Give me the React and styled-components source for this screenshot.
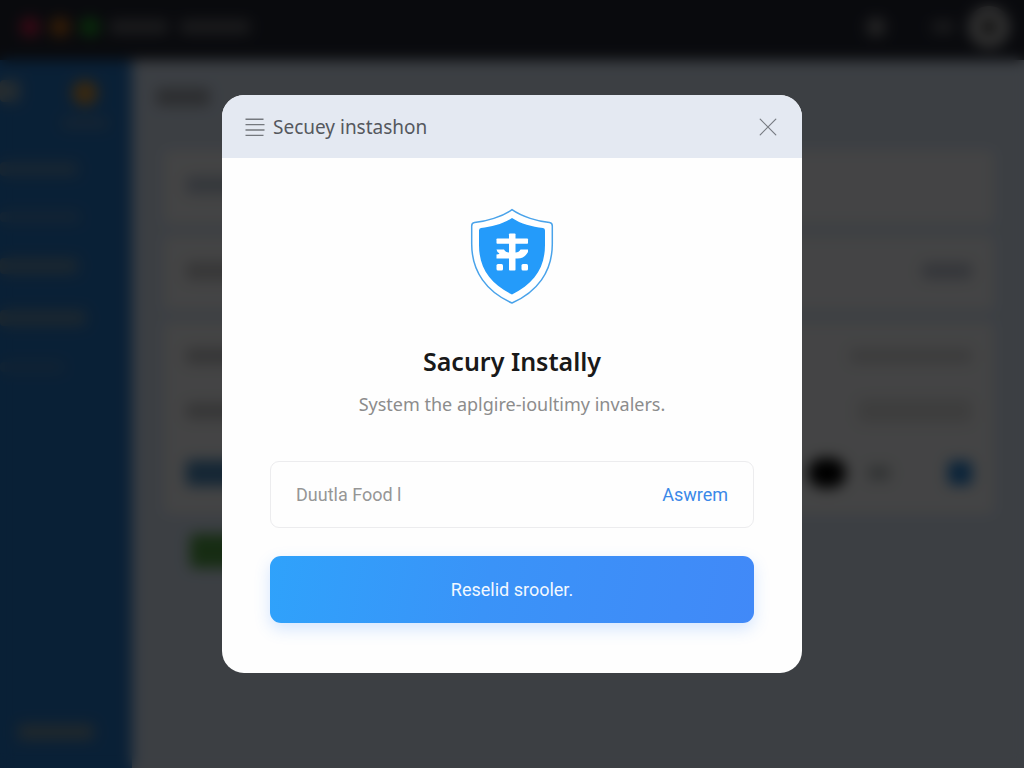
import React from "react";
import styled, { createGlobalStyle } from "styled-components";

const GlobalStyle = createGlobalStyle`
  *, *::before, *::after { box-sizing: border-box; }
  body {
    margin: 0;
    font-family: "Noto Sans", "Open Sans", sans-serif;
    background: #c8d5ec;
  }
  button, input { font: inherit; }
`;

/* ---------- Page behind the dialog ---------- */

const Page = styled.div`
  min-height: 100vh;
  display: grid;
  grid-template-columns: 132px 1fr;
  grid-template-rows: 60px 1fr;
`;

const TopBar = styled.header`
  grid-column: 1 / -1;
  display: flex;
  align-items: center;
  gap: 10px;
  padding: 0 14px 6px 20px;
  background: #20232e;
`;

const WindowDot = styled.span`
  width: 20px;
  height: 20px;
  border-radius: 50%;
  background: ${(p) => p.$color};
`;

const Spacer = styled.span`
  flex: 1;
`;

const Avatar = styled.span`
  width: 42px;
  height: 42px;
  margin-left: 4px;
  border: 14px solid #a4a4a4;
  border-radius: 50%;
  background: #202020;
`;

const Line = styled.span`
  display: block;
  width: ${(p) => p.$w}px;
  height: ${(p) => p.$h || 14}px;
  border-radius: ${(p) => p.$r || 4}px;
  background: ${(p) => p.$color};
`;

const Sidebar = styled.nav`
  display: flex;
  flex-direction: column;
  gap: 36px;
  padding: 20px 0 28px;
  background: #216bb4;
`;

const SidebarHead = styled.div`
  display: flex;
  justify-content: space-between;
  padding-right: 24px;
  margin-bottom: -2px;
`;

const Badge = styled.div`
  display: flex;
  flex-direction: column;
  align-items: center;
  gap: 12px;
`;

const SidebarFoot = styled.div`
  margin-top: auto;
  padding-left: 18px;
`;

const Main = styled.main`
  display: flex;
  flex-direction: column;
  gap: 12px;
  padding: 28px 30px 28px 32px;
  background: #c8d3e2;
`;

const PageTitle = styled.div`
  height: 50px;
  margin-left: -8px;
`;

const Card = styled.section`
  display: flex;
  flex-direction: column;
  justify-content: space-between;
  min-height: ${(p) => p.$h}px;
  padding: 26px 22px;
  background: #e3e4e6;
`;

const Row = styled.div`
  display: flex;
  justify-content: space-between;
  align-items: center;
`;

const Group = styled.div`
  display: flex;
  align-items: center;
  gap: ${(p) => p.$gap || 20}px;
`;

const Status = styled.div`
  padding-left: 26px;
  margin-top: 8px;
`;

/* ---------- Dialog ---------- */

const Overlay = styled.div`
  position: fixed;
  inset: 0;
  display: flex;
  align-items: center;
  justify-content: center;
  padding: 16px;
  background: rgba(0, 0, 0, 0.7);
  backdrop-filter: blur(7px);
`;

const Dialog = styled.section`
  width: 100%;
  max-width: 580px;
  overflow: hidden;
  border-radius: 22px;
  background: #fefefe;
`;

const DialogHeader = styled.header`
  display: flex;
  align-items: center;
  gap: 8px;
  height: 63px;
  padding: 0 24px 0 22px;
  background: #e4e9f2;
`;

const IconButton = styled.button`
  display: flex;
  padding: 0;
  border: 0;
  background: none;
  color: ${(p) => p.$color};
  cursor: pointer;
`;

const DialogName = styled.span`
  flex: 1;
  font-size: 19px;
  line-height: 24px;
  color: #55585e;
`;

const DialogBody = styled.div`
  display: flex;
  flex-direction: column;
  align-items: center;
  padding: 50px 48px;
`;

const Title = styled.h1`
  margin: 38px 0 0;
  font-size: 25px;
  line-height: 36px;
  font-weight: 600;
  color: #191919;
`;

const Subtitle = styled.p`
  margin: 13px 0 0;
  font-size: 18px;
  line-height: 24px;
  color: #8c8c8c;
`;

const Field = styled.div`
  display: flex;
  align-items: center;
  width: 100%;
  height: 67px;
  margin-top: 45px;
  padding: 0 25px;
  border: 1px solid #ececee;
  border-radius: 9px;
`;

const FieldInput = styled.input`
  flex: 1;
  min-width: 0;
  padding: 0;
  border: 0;
  outline: 0;
  background: none;
  font-family: Roboto, sans-serif;
  font-size: 18px;
  line-height: 24px;
  &::placeholder {
    color: #969696;
    opacity: 1;
  }
`;

const FieldLink = styled.a`
  font-family: Roboto, sans-serif;
  font-size: 18px;
  line-height: 24px;
  color: #3a88e8;
  text-decoration: none;
`;

const PrimaryButton = styled.button`
  width: 100%;
  height: 67px;
  margin-top: 28px;
  border: 0;
  border-radius: 11px;
  background: linear-gradient(100deg, #2fa2fb 0%, #3a93f8 45%, #4189f8 100%);
  box-shadow: 0 6px 16px rgba(64, 140, 255, 0.22);
  font-family: Roboto, sans-serif;
  font-size: 18px;
  line-height: 24px;
  color: #f2f8ff;
  cursor: pointer;
`;

const MenuIcon = () => (
  <svg width="21" height="20" viewBox="0 0 21 20" fill="none" stroke="currentColor" strokeWidth="1.4" aria-hidden="true">
    <path d="M1.5 2.2H19.5M1.5 7.6H20.5M1.5 13H20.5M1.5 18.4H19.5" />
  </svg>
);

const CloseIcon = () => (
  <svg width="20" height="20" viewBox="0 0 20 20" fill="none" stroke="currentColor" strokeWidth="1.2" strokeLinecap="round" aria-hidden="true">
    <path d="M2.2 2.2L17.8 17.8M17.8 2.2L2.2 17.8" />
  </svg>
);

const Shield = () => (
  <svg width="84" height="97" viewBox="0 0 84 97" aria-hidden="true">
    <path
      d="M42 1.7C32 8.8 16 13.4 4.5 14.6Q1.7 15 1.7 18V36C1.7 64 17 84 42 95C67 84 82.3 64 82.3 36V18Q82.3 15 79.5 14.6C68 13.4 52 8.8 42 1.7Z"
      fill="#fff"
      stroke="#4aa3ea"
      strokeWidth="1.5"
    />
    <path
      d="M42 10C33 16 22 18.5 11 20Q9 20.3 9 22.5V37C9 60 20 75.5 42 86.5C64 75.5 75 60 75 37V22.5Q75 20.3 73 20C62 18.5 51 16 42 10Z"
      fill="#249bfa"
    />
    <g fill="#fff">
      <rect x="39" y="25.5" width="6.5" height="37" rx="0.8" />
      <rect x="26.5" y="30.5" width="31.5" height="5.2" rx="0.8" />
      <path d="M26.5 41.5H34Q35.5 44.5 39 44.5H45.5Q49 44.5 50.5 41.500H58V44Q54.500 50.500 47.500 50.500H26.500V46.500Q28.500 46.500 29.500 45.500Q27 44.500 26.500 41.500Z" />
      <rect x="26.5" y="56" width="6.5" height="6.5" rx="1.5" />
      <rect x="51.5" y="56" width="6.5" height="6.5" rx="1.5" />
    </g>
  </svg>
);

export default function App() {
  return (
    <>
      <GlobalStyle />
      <Page aria-hidden="true">
        <TopBar>
          <WindowDot $color="#b82044" />
          <WindowDot $color="#b06018" />
          <WindowDot $color="#229028" />
          <Group $gap={12}>
            <Line $w={58} $color="#5c5d62" />
            <Line $w={70} $color="#5c5d62" />
          </Group>
          <Spacer />
          <Group $gap={46}>
            <Line $w={20} $h={20} $r={10} $color="#7a7a7c" />
            <Line $w={22} $h={12} $color="#5c5d62" />
          </Group>
          <Avatar />
        </TopBar>

        <Sidebar>
          <SidebarHead>
            <Line $w={20} $h={22} $color="#7e94a0" />
            <Badge>
              <Line $w={26} $h={26} $r={13} $color="#bd8638" />
              <Line $w={46} $h={10} $color="#4f7ca6" />
            </Badge>
          </SidebarHead>
          <Line $w={78} $color="#527fa6" />
          <Line $w={80} $h={10} $color="#487cac" />
          <Line $w={78} $h={16} $color="#5c829e" />
          <Line $w={86} $h={16} $color="#5c829e" />
          <Line $w={64} $h={10} $color="#3c76ac" />
          <SidebarFoot>
            <Line $w={76} $h={16} $color="#6c8694" />
          </SidebarFoot>
        </Sidebar>

        <Main>
          <PageTitle>
            <Line $w={54} $h={18} $color="#94989f" />
          </PageTitle>
          <Card $h={74}>
            <Row>
              <Line $w={54} $h={18} $color="#b0b9c8" />
            </Row>
          </Card>
          <Card $h={74}>
            <Row>
              <Line $w={56} $h={18} $color="#b8b8ba" />
              <Line $w={50} $h={16} $color="#b0b5c2" />
            </Row>
          </Card>
          <Card $h={192}>
            <Row>
              <Line $w={56} $h={16} $color="#b4b4b6" />
              <Line $w={122} $h={14} $color="#c6c6c8" />
            </Row>
            <Row>
              <Line $w={56} $h={16} $color="#b4b4b6" />
              <Line $w={114} $h={24} $color="#cecece" />
            </Row>
            <Row>
              <Line $w={60} $h={26} $color="#4680b0" />
              <Group $gap={22}>
                <Line $w={38} $h={30} $r={15} $color="#000000" />
                <Line $w={22} $h={14} $color="#a4aaac" />
                <Group $gap={36}>
                  <span />
                  <Line $w={24} $h={24} $color="#2476c0" />
                </Group>
              </Group>
            </Row>
          </Card>
          <Status>
            <Line $w={60} $h={34} $color="#4c9440" />
          </Status>
        </Main>
      </Page>

      <Overlay>
        <Dialog role="dialog" aria-modal="true" aria-labelledby="dialog-title">
          <DialogHeader>
            <IconButton type="button" aria-label="Menu" $color="#74787e">
              <MenuIcon />
            </IconButton>
            <DialogName>Secuey instashon</DialogName>
            <IconButton type="button" aria-label="Close" $color="#777b82">
              <CloseIcon />
            </IconButton>
          </DialogHeader>
          <DialogBody>
            <Shield />
            <Title id="dialog-title">Sacury Instally</Title>
            <Subtitle>System the aplgire-ioultimy invalers.</Subtitle>
            <Field>
              <FieldInput type="text" aria-label="Duutla Food l" placeholder="Duutla Food l" />
              <FieldLink href="#">Aswrem</FieldLink>
            </Field>
            <PrimaryButton type="button">Reselid srooler.</PrimaryButton>
          </DialogBody>
        </Dialog>
      </Overlay>
    </>
  );
}
